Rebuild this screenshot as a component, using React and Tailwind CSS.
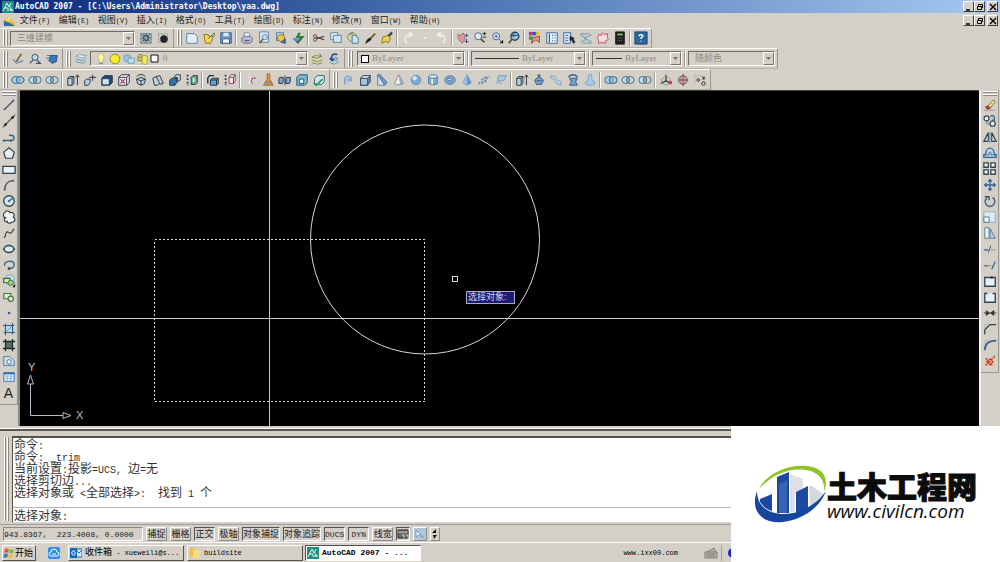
import { useState } from 'react';

const CUBE = (
    <>
        <path d="M3 6l3-3h8v7l-3 4H3z" fill="#5b86b8" />
        <path d="M3 6h8v8H3z" fill="#9fc3e2" />
        <path d="M3 6l3-3h8l-3 3z" fill="#e4f1fa" />
    </>
);

const RINGS = (
    <>
        <ellipse cx="5.5" cy="8" rx="4.5" ry="4" fill="#a9cfe4" stroke="#2b5d86" />
        <ellipse cx="10.5" cy="8" rx="4.5" ry="4" fill="#8cb9d6" fillOpacity="0.6" stroke="#2b5d86" />
    </>
);

const RINGS_OPEN = (
    <>
        <ellipse cx="5.5" cy="8" rx="4.5" ry="4" fill="#c3dcea" stroke="#3f5f7a" />
        <ellipse cx="10.5" cy="8" rx="4.5" ry="4" fill="none" stroke="#3f5f7a" />
        <path d="M8 5v6" stroke="#2f6ea5" />
    </>
);

const ICONS = {
    // workspace
    gear: <><rect x="2" y="3" width="12" height="11" fill="#9fb6c4" stroke="#4a5a66" strokeDasharray="2 1" /><circle cx="8" cy="8" r="3" fill="#e8eef2" /><path d="M8 3v3M8 10v3M3 8h3M10 8h3M4 4l8 8M12 4l-8 8" /><circle cx="8" cy="8" r="1.5" fill="#fff" /></>,
    chip: <><path d="M3 3h10v10H3z" stroke="#8a8a86" strokeDasharray="2 1" /><circle cx="9" cy="9" r="4" fill="#1e252c" stroke="#1e252c" strokeDasharray="2 1" /></>,
    // standard
    sheet: <path d="M2 3h9l3 3v8H2z" fill="#e3f0fb" stroke="#54789c" />,
    open: <><path d="M2 4h5l1 2h5l-3 8H4z" fill="#f2d25c" stroke="#8a6a14" /><path d="M7 9l7-7M14 2v4" stroke="#3e7d3e" /></>,
    save: <><path d="M2 2h12v12H2z" fill="#6c98cc" stroke="#2f5688" /><path d="M5 2h6v4H5z" fill="#dbe8f6" stroke="none" /><path d="M4 9h8v5H4z" fill="#f3f6fa" stroke="#2f5688" /></>,
    print: <><path d="M5 2h5l2 5H5z" fill="#fff" stroke="#7d7da0" /><path d="M2 8l3-2h7l2 2v4l-3 2H4l-2-2z" fill="#b9b9cf" stroke="#6a6a90" /><path d="M5 11h6" stroke="#41416e" /></>,
    preview: <><path d="M3 1h10v12H3z" fill="#dcebf7" stroke="#54789c" /><circle cx="9" cy="7" r="3" fill="#bfe0f2" stroke="#5f86a8" /><path d="M7 9l-4 5" strokeWidth="2" stroke="#7a6a4a" /></>,
    publish: <><path d="M3 2h8v9H3z" fill="#cfe4f5" stroke="#3f6da0" /><circle cx="8" cy="8" r="4" fill="#f1c644" stroke="#98722a" /><path d="M8 13l5-4v5z" fill="#3f78bd" stroke="#2f5688" /></>,
    dwf: <><path d="M10 2l-3 5h6l-6 7" stroke="#2f7a45" strokeWidth="2.5" /><path d="M2 8l5 5 3-4" fill="#5f93cf" stroke="#2f5688" /></>,
    cut: <><path d="M14 6L5 9M14 10L5 7" strokeWidth="1.5" /><circle cx="3.500" cy="6" r="1.8" stroke="#7a3940" /><circle cx="3.500" cy="10" r="1.8" stroke="#7a3940" /></>,
    copy: <><path d="M2 2h8v8H2z" fill="#e3f0fb" stroke="#54789c" /><path d="M5 5h9v8H5z" fill="#cfe4f5" stroke="#54789c" /></>,
    paste: <><circle cx="7" cy="7" r="5" fill="#d4d9a6" stroke="#7b8050" /><path d="M7 5h4l3 3v6H7z" fill="#cbe2f2" stroke="#42709a" /><path d="M4 4l4-2" stroke="#59662e" /></>,
    brush: <><path d="M14 3L8 9" strokeWidth="2" stroke="#6e5a2c" /><path d="M8 8l1 2-6 4 2-4z" fill="#1d1d1d" stroke="#1d1d1d" /></>,
    match: <><path d="M9 5l4-4 1 2-4 4z" fill="#4c4a3a" /><path d="M3 7l6-2 3 3-2 5-4-1-4 2z" fill="#f0cf50" stroke="#8d6f12" /></>,
    undo: <path d="M7 14C2 9 5 4 12 4M9 1l4 3-4 3" stroke="#f2f1ee" strokeWidth="1.6" />,
    redo: <path d="M9 14c5-5 2-10-5-10M7 1L3 4l4 3" stroke="#f2f1ee" strokeWidth="1.6" />,
    dot: <circle cx="8" cy="8" r="1" fill="#f5f5f3" stroke="#eceae4" />,
    pan: <><path d="M2 4l4 1 2-3 2 3v5l-3 4-4-4z" fill="#d69a9a" stroke="#a5696c" /><path d="M12 3v4M10 5h4M12 9v5M10 12h4" stroke="#2a4d70" /></>,
    zoomIn: <><circle cx="6" cy="6" r="4" fill="#d8ebf7" stroke="#3d5c85" /><path d="M9 9l4 4" strokeWidth="2.2" stroke="#6b5535" /><path d="M11 3h4M13 1v4M11 7h4" stroke="#222" /></>,
    zoomWin: <><circle cx="7" cy="6" r="4" fill="#d8ebf7" stroke="#3d5c85" /><path d="M5 6h4M7 4v4M10 9l3 3" stroke="#3d5c85" /><path d="M11 14h4v-4z" fill="#111" stroke="none" /></>,
    zoomPrev: <><circle cx="9" cy="6" r="4.500" fill="#9cc5e4" stroke="#1f3f6b" strokeWidth="1.6" /><path d="M6 9l-4 5" strokeWidth="2.2" stroke="#6b5535" /><path d="M12 5H6l2-2M6 5l2 2" stroke="#122c50" /></>,
    props: <><path d="M1 1h4v4H1z" fill="#d22d8b" stroke="none" /><path d="M5 1h4v4H5z" fill="#2450c8" stroke="none" /><path d="M9 1h4v4H9z" fill="#e8b92c" stroke="none" /><path d="M1 6h4v4H1z" fill="#36a14a" stroke="none" /><path d="M5 8l8-2v7l-4-3-5 4z" fill="#e6a090" stroke="#7d3a36" /></>,
    center: <><path d="M2 2h12v12H2z" fill="#e6f1fa" stroke="#2d5f95" /><path d="M5 3v10M8 5h1M11 5h1M8 8h1M11 8h1M8 11h1M11 11h1" stroke="#2d5f95" strokeWidth="1.4" /></>,
    palette: <><path d="M2 2h8v12H2z" fill="#d4e7f6" stroke="#2d5f95" /><path d="M4 5h3M4 8h3M4 11h3" stroke="#2d5f95" /><path d="M9 6l5 2-1 1 2 4-2 1-2-4-2 1z" fill="#223" stroke="#223" strokeWidth="0.5" /></>,
    sheets: <path d="M2 3h9l3 2-8 3 8 4v2H4l-2-2 7-3-7-4z" fill="#b4cbd2" stroke="#7d9da4" />,
    markup: <path d="M3 4l3 1 1-3 3 2 3-1v4l1 3-3 1v3l-4-1-4 1v-4l-2-2 2-2z" fill="#f5dede" stroke="#cb4650" />,
    calc: <><path d="M3 1h10v14H3z" fill="#221d1f" stroke="#221d1f" /><path d="M5 4h6" stroke="#6fd26f" strokeWidth="2" /><path d="M5 8h6M5 11h6" stroke="#e2625c" strokeDasharray="1 1" /></>,
    help: <><path d="M1 1h14v14H1z" fill="#2e6699" stroke="#1a436c" /><path d="M6 6c0-3 5-2 4 0-1 1-2 1-2 3M8 11v1" stroke="#fff" strokeWidth="1.6" /></>,
    // layers
    sketch: <><path d="M2 8l4 5 8-3" fill="#a7c7dc" stroke="#4a7195" /><path d="M6 11l6-9" stroke="#7d6334" strokeWidth="1.800" /></>,
    find: <><circle cx="8" cy="6" r="3.500" fill="#bcdcf0" /><path d="M6 9l-4 4M10 9l4 4H9" stroke="#39566e" strokeWidth="1.500" /></>,
    cache: <><path d="M2 4h5M1 7h5M3 10h4" stroke="#44769c" /><path d="M6 4h8l-1 7-5 2-3-3z" fill="#3a77b4" stroke="#1f4d7c" /></>,
    layers: <><path d="M2 5l4-2 8 1-4 3z" fill="#e6f1f9" stroke="#6d9cb5" /><path d="M2 8l8 2 4-3M2 11l8 2 4-3" stroke="#5f93b3" /></>,
    layerCur: <><path d="M2 6l4-2 7 1-4 2zM2 9l7 2 5-2M2 12l7 2 5-2" fill="#e8e3a0" stroke="#7b8038" /><path d="M11 2l2 3" stroke="#2d5f95" /></>,
    layerPrev: <><path d="M3 12l5 2 6-3" stroke="#5f93b3" /><path d="M12 3C6 1 4 5 6 9M3 7l3 3 3-3" stroke="#1f4d94" strokeWidth="1.800" /><circle cx="10" cy="8" r="2" fill="#9cc5e4" stroke="#5f93b3" /></>,
    bulb: <><path d="M8 2a4 4 0 0 1 2 7v3H6V9a4 4 0 0 1 2-7z" fill="#fbf6a5" stroke="#c9be72" /><path d="M6 13h4" stroke="#7b94b5" strokeWidth="2" /></>,
    sun: <circle cx="8" cy="8" r="5.500" fill="#f4ee2a" stroke="#8a8622" />,
    freeze: <><circle cx="6" cy="7" r="4" fill="#9cc5da" stroke="#6c9ab0" /><path d="M7 7h7v6H7z" fill="#c2dbe8" stroke="#6c9ab0" /></>,
    lock: <><path d="M3 6V3h4v3" stroke="#8b8630" /><path d="M2 6h5v4H2z" fill="#cfc847" stroke="#8b8630" /><rect x="7" y="4" width="6" height="10" rx="2" fill="#ece86a" stroke="#a39d34" /></>,
    // solid editing
    union: RINGS,
    subtract: RINGS_OPEN,
    intersect: RINGS_OPEN,
    extrudeFace: <><path d="M2 6l2-2h5v8l-2 2H2z" fill="#b9d3e2" stroke="#1f2a33" /><path d="M2 6h5v8M7 6l2-2" stroke="#1f2a33" /><path d="M13 14V3M11 5l2-3 2 3" stroke="#1f2a33" /></>,
    moveFace: <><path d="M2 9l2-2h4v4l-2 3H2z" fill="#b9d3e2" stroke="#1f2a33" /><path d="M7 5h8M11 2v7" stroke="#1f2a33" /></>,
    offsetFace: <><path d="M2 6l3-3h9v8l-3 3H2z" fill="#234a72" stroke="#1f2a33" /><path d="M3 7h7v6H3z" fill="#cfe2ee" stroke="none" /></>,
    deleteFace: <><path d="M2 5l3-3h9v9l-3 3H2z" fill="#e9eef2" stroke="#1f2a33" /><path d="M2 5h9v9M11 5l3-3" stroke="#1f2a33" /><path d="M4 7l5 5M9 7l-5 5" stroke="#c0307a" strokeWidth="1.500" /></>,
    rotateFace: <><path d="M3 7l5-2 5 2-1 5-4 2-4-2z" fill="#b9d3e2" stroke="#1f2a33" /><path d="M8 9v5M3 7l5 2 5-2M3 4c3-3 7-3 10 0" stroke="#1f2a33" /></>,
    taperFace: <><path d="M2 6l4-2 4 8-3 2H4z" fill="#b9d3e2" stroke="#1f2a33" /><path d="M6 4l4-1 4 9-4 1" stroke="#1f2a33" /></>,
    copyFace: <><path d="M2 8l2-2h6v5l-2 3H2z" fill="#2f73ad" stroke="#1f2a33" /><path d="M7 5l2-3h5v6l-3 2V5z" fill="#cfe2ee" stroke="#1f2a33" /></>,
    colorFace: <><path d="M7 5l2-2h5v8l-2 2H7z" fill="#6fae94" stroke="#1f2a33" /><path d="M3 2v2M3 6v2M3 10v2M3 13v1" stroke="#234" strokeWidth="2" /><path d="M9 6h2v4H9z" fill="#e6efe9" stroke="none" /></>,
    copyEdge: <><path d="M5 8l2-2h7v6l-2 2H5z" fill="#69a1cf" stroke="#1f2a33" /><path d="M5 8h7v6M12 8l2-2" stroke="#1f2a33" /><path d="M2 12V6l2-3h5" stroke="#1f2a33" strokeWidth="1.500" /></>,
    colorEdge: <><path d="M7 5l2-3h5v7l-2 3H7z" fill="#f6e7ec" stroke="#a4315d" /><path d="M7 5h5v7M12 5l2-3" stroke="#33404a" /><path d="M3 2v2M3 6v2M3 10v2M3 13v1" stroke="#2b3b3b" strokeWidth="2" /></>,
    imprint: <><path d="M4 3l4 3-3 6" stroke="#e5e3f3" strokeWidth="2" /><path d="M13 6c-5-1-6 3-3 6" stroke="#a32e66" strokeDasharray="2 1" strokeWidth="1.500" /></>,
    clean: <><path d="M7 1h3v6l4 7H3l4-7z" fill="#e2903c" stroke="#b8682d" /><path d="M3 14l3-5 2 4 2-4 3 5" stroke="#6a80b0" /></>,
    separate: <><path d="M1 7l1-2h4v5l-1 2H1zM9 7l1-2h4v5l-1 2H9z" fill="#7aa7c8" stroke="#1f2a33" /><path d="M8 3v11" stroke="#1f2a33" /></>,
    shell: <><path d="M2 5l3-3h9v9l-3 3H2z" fill="#7ab8d0" stroke="#1d5266" /><path d="M5 7h5v5H5z" fill="#d9edf2" stroke="#1d5266" /></>,
    check: <><path d="M3 6l3-3h8v7l-3 3H3z" fill="#cfe8ee" stroke="#295b77" /><path d="M2 11l3 3 7-7" stroke="#2d9659" strokeWidth="2" /></>,
    // modeling
    polysolid: <path d="M4 13V6l3-3 5 2v4l-3-2v3" fill="#a9c6e2" stroke="#6a93bd" />,
    box: CUBE,
    wedge: <><path d="M3 2l3 0 8 9-3 3z" fill="#6f97c2" stroke="#55779e" /><path d="M3 2l8 12H3z" fill="#cfe1f1" stroke="#55779e" /></>,
    cone: <><path d="M8 2l5 10c-2 2-8 2-10 0z" fill="#eef3f7" stroke="#6f8296" /><path d="M8 2l5 10c-1 1-2 2-4 2z" fill="#93a6ba" stroke="none" /></>,
    sphere: <><circle cx="8" cy="8" r="5.500" fill="#7ea8d4" stroke="#6e8fb5" /><circle cx="6.500" cy="6" r="2.500" fill="#d5e7f7" stroke="none" /></>,
    cylinder: <><path d="M3 4v8c2 2 8 2 10 0V4z" fill="#7fa9d6" stroke="#4a6f9a" /><path d="M6 6h2v7H6z" fill="#dcecf9" stroke="none" /><ellipse cx="8" cy="4" rx="5" ry="2" fill="#dcecf9" stroke="#4a6f9a" /></>,
    torus: <><ellipse cx="8" cy="8" rx="6" ry="5" fill="#7aa4d0" stroke="#5a7ca4" /><ellipse cx="7.500" cy="7.500" rx="2" ry="1.500" fill="#eef4fa" stroke="#3d5e85" /></>,
    pyramid: <><path d="M8 2l5 9-5 3-5-3z" fill="#9cc3e5" stroke="#7ba6cd" /><path d="M8 2v12l5-3z" fill="#6796c4" stroke="none" /></>,
    helix: <path d="M2 13c1-4 4-3 4 0 0-5 5-6 4-2-1-5 4-6 4-8M5 8l6-4" stroke="#6489ae" strokeDasharray="3 1" strokeWidth="1.600" />,
    plane: <><path d="M5 3h9l-3 6H4z" fill="#a8cae8" stroke="#6e97bd" /><path d="M2 12l4-2 2 3" stroke="#8ab1d4" strokeWidth="1.500" /></>,
    sweep: <path d="M2 3l5 1 3 5 4 1-1 4-5-3-2-4-4-1z" fill="#c4d6e5" stroke="#7d9bb6" />,
    press: <><path d="M3 8l5-4 5 4-2 5H5z" fill="#7aa5d4" stroke="#334f78" /><path d="M8 1v4M6 3h4M5 9h6" stroke="#334f78" /></>,
    revolve: <><path d="M3 5c2-4 8-4 10 0" stroke="#2f6396" strokeWidth="1.600" /><path d="M4 6h9l-2 4 2 4H4l2-4z" fill="#6f9ecb" stroke="#355b85" /></>,
    loft: <path d="M6 2h4v5l4 5-4 2H5l-3-2 4-5z" fill="#a5cae6" stroke="#79a5c9" />,
    ucs: <><path d="M8 9V2M8 9l-6 3M8 9l6 3" stroke="#2e3d36" strokeWidth="1.400" /><path d="M3 7l5-4 5 4v4l-5 3-5-3z" stroke="#83928c" /><circle cx="13" cy="11" r="1.500" fill="#c0323a" stroke="#c0323a" /></>,
    orbit: <><circle cx="8" cy="8" r="5" stroke="#49695e" /><path d="M8 1v14M2 8h12" stroke="#7b2f45" /><ellipse cx="8" cy="8" rx="2.500" ry="5" stroke="#a04a63" /></>,
    convert: <><path d="M2 2v12M2 3h7" stroke="#999" strokeDasharray="1 1" /><circle cx="6" cy="8" r="1.500" stroke="#222" /><path d="M10 4l4 3M13 4l-2 4" stroke="#222" /><circle cx="12" cy="12" r="2" stroke="#222" /></>,
    // draw
    line: <><path d="M3 13L13 3" strokeWidth="1.400" /><path d="M2 12h2v2H2zM12 2h2v2h-2z" fill="#35658f" stroke="none" /></>,
    xline: <><path d="M1 15L15 1" strokeWidth="1.300" /><circle cx="4" cy="12" r="1" fill="#111" stroke="#111" /><circle cx="12" cy="4" r="1" fill="#111" stroke="#111" /></>,
    pline: <><path d="M2 12h8c5 0 5-6 0-6H8" stroke="#35658f" strokeWidth="1.500" /><path d="M1 11h2v2H1zM9 11h2v2H9z" fill="#34434f" stroke="none" /></>,
    polygon: <path d="M8 2l6 5-2 7H4L2 7z" fill="#e9eef0" strokeWidth="1.400" />,
    rect: <path d="M1 5h14v8H1z" fill="#e6f0f7" strokeWidth="1.500" />,
    arc: <><path d="M3 14C3 7 7 3 13 3" strokeWidth="1.600" /><path d="M2 12h2v2H2zM12 2h2v2h-2z" fill="#35658f" stroke="none" /></>,
    circle: <><circle cx="8" cy="8" r="6" fill="#d8e9f5" strokeWidth="1.500" /><path d="M8 8l4-3" stroke="#2f65a0" strokeWidth="1.600" /><circle cx="8" cy="8" r="1" fill="#2f65a0" stroke="#2f65a0" /></>,
    cloud: <path d="M3 3c2-3 5-2 6 0 4-1 6 2 4 5 3 2 2 6-2 6-2 2-5 1-5-1-4 1-4-3-2-4-3-1-3-4-1-6z" fill="#f4f6f7" strokeWidth="1.400" />,
    spline: <path d="M2 13c3 1 1-8 5-6 4 3 4 0 7-4" strokeWidth="1.300" />,
    ellipse: <><ellipse cx="8" cy="8" rx="5.500" ry="4" fill="#dcebf5" strokeWidth="1.700" /><path d="M1 7h2v2H1zM13 7h2v2h-2zM7 3h2v2H7z" fill="#35658f" stroke="none" /></>,
    ellArc: <><path d="M3 9C1 3 13 2 14 7c0 4-3 5-6 5" strokeWidth="1.600" stroke="#44688a" /><path d="M7 11h2v2H7z" fill="#35658f" /></>,
    insert: <><path d="M4 6a5 5 0 0 1 10 0v6H6z" fill="#c5def0" stroke="#7ba0c0" /><path d="M2 5h7v5H2z" fill="#d3efc2" stroke="#37692b" strokeWidth="1.400" /><circle cx="10" cy="10" r="3" fill="#a8cf8c" stroke="#37692b" /><path d="M12 15h3v-4z" fill="#111" stroke="none" /></>,
    block: <><path d="M2 4h8v6H2z" fill="#e2f1d6" stroke="#4f7545" strokeWidth="1.400" /><circle cx="10" cy="10" r="3" fill="#d3e5c6" stroke="#4f7545" strokeWidth="1.400" /></>,
    point: <circle cx="8" cy="8" r="1" fill="#1f4d94" stroke="#1f4d94" />,
    hatch: <><path d="M4 2v13M12 1v13M1 4h13M2 12h13" strokeWidth="1.400" stroke="#345f8c" /><path d="M5 5h6v6H5z" fill="#b5dbf5" stroke="none" /><path d="M5 11l6-6" stroke="#5c92c5" /></>,
    gradient: <><path d="M4 4h8v8H4z" fill="#5b6f67" stroke="none" /><path d="M4 1v14M12 1v14M1 4h14M1 12h14" strokeWidth="1.500" stroke="#1e2a2e" /></>,
    region: <><path d="M2 3h7l5 5v5H2z" fill="#cfe3f3" stroke="#41719c" /><circle cx="8" cy="9" r="2.500" fill="#fff" stroke="#2f5f8e" /></>,
    table: <><path d="M2 3h12v10H2z" fill="#eef5fc" stroke="#356db0" /><path d="M2 4h12" stroke="#2c66b2" strokeWidth="2" /><path d="M6 4v9M10 4v9M2 7h12M2 10h12" stroke="#86afe0" /></>,
    // modify
    erase: <><path d="M5 10l7-8 2 2-6 8z" fill="#eee08a" stroke="#7c6f2b" /><path d="M3 10l3-1 2 3-3 1z" fill="#cc3a3a" stroke="#8a2b2b" /><path d="M1 14h13" stroke="#8aa0a8" /></>,
    clone: <><circle cx="4" cy="5" r="2.800" fill="#e5edf2" strokeWidth="1.400" /><path d="M8 3c2-2 6-1 5 2M13 4v3h-3" strokeWidth="1.400" stroke="#35658f" /><path d="M5 8c-2 2-1 4 2 3" stroke="#35658f" /><circle cx="11" cy="11" r="3" fill="#e5edf2" strokeWidth="1.400" /></>,
    mirror: <><path d="M6 3v10H1zM10 3v10h5z" fill="#cfdee5" strokeWidth="1.300" /><path d="M8 2v13" stroke="#3c7fb0" /></>,
    offset: <><path d="M1 13h14v-3h-2c0-10-10-10-10 0H1z" fill="#b4d5ec" stroke="#346292" strokeWidth="1.500" /><path d="M4 10h3c-1-4 3-4 2 0h3" stroke="#346292" /></>,
    array: <path d="M1 1h5v5H1zM9 1h5v5H9zM1 9h5v5H1zM9 9h5v5H9z" fill="#f1f4f4" strokeWidth="1.500" />,
    move: <path d="M8 2v12M2 8h12M6 4l2-2 2 2M6 12l2 2 2-2M4 6L2 8l2 2M12 6l2 2-2 2" stroke="#2e6498" strokeWidth="1.500" />,
    rotate: <><path d="M5 4a5.500 5.500 0 1 0 6 0" stroke="#4b6c88" strokeWidth="1.800" /><path d="M2 3h5v4" stroke="#2c4965" strokeWidth="1.400" /></>,
    scale: <><path d="M1 2h13v12H1z" fill="#dbeaf5" stroke="#8dabc1" /><path d="M1 8h6v6H1z" fill="#f5fafd" stroke="#476d8d" /></>,
    stretch: <><path d="M2 2h5v12H2z" fill="#e3eff7" stroke="#50728c" /><path d="M8 3l6 11H8z" fill="#b5d0e4" stroke="#50728c" /></>,
    trim: <><path d="M1 9h5" stroke="#2f6a9c" strokeWidth="1.500" /><path d="M9 9h6" stroke="#777" strokeDasharray="2 1" /><path d="M6 12l3-8" /></>,
    extend: <><path d="M1 9h5" stroke="#333" /><path d="M7 9h4" stroke="#777" strokeDasharray="2 1" /><path d="M10 13l4-9" stroke="#39709c" strokeWidth="1.500" /></>,
    breakPt: <><path d="M2 4h12v10H2z" fill="#e6f1f9" strokeWidth="1.500" /><path d="M9 3h2v2H9z" fill="#111" stroke="none" /></>,
    breakGap: <path d="M5 4H2v10h12V4h-3" fill="#e6f1f9" strokeWidth="1.500" />,
    join: <path d="M1 8h14M4 6l3 2-3 2zM12 6L9 8l3 2z" fill="#333" stroke="#333" strokeWidth="1.400" />,
    chamfer: <><path d="M2 14V9l6-6h7" strokeWidth="1.500" /><path d="M2 9V3h6" stroke="#88a0ae" strokeDasharray="1 1" /></>,
    fillet: <><path d="M2 14C2 7 6 3 15 3" stroke="#35658f" strokeWidth="2" /><path d="M2 9V3h6" stroke="#88a0ae" strokeDasharray="1 1" /></>,
    explode: <><path d="M3 5h9v8H3z" fill="#e9a57c" stroke="none" /><path d="M3 5l3 3 3-3 2 4-2 4-3-3-3 3M4 9h8" stroke="#b5352a" strokeDasharray="2 1" strokeWidth="1.600" /><path d="M11 5l3-3" stroke="#c9783a" strokeWidth="2" /></>,
};

function Icon({ name }) {
    return (
        <svg viewBox="0 0 16 16" className="h-[14px] w-[14px] shrink-0" fill="none" stroke="#34434f">
            {ICONS[name]}
        </svg>
    );
}

function Tool({ name }) {
    return (
        <button type="button" aria-label={name} className="flex h-4 w-[17px] shrink-0 items-center justify-center hover:bg-[#e4e1da]">
            <Icon name={name} />
        </button>
    );
}

function Divider() {
    return <span className="mx-px h-4 w-[2px] shrink-0 border-l border-[#a09c94] bg-white" />;
}

function Grip() {
    return (
        <span className="mr-px ml-[3px] flex h-4 shrink-0 gap-px">
            <span className="w-[2px] border-r border-[#8d8a83] bg-white" />
            <span className="w-[2px] border-r border-[#8d8a83] bg-white" />
        </span>
    );
}

// names is a list of icon names, '|' puts a divider between two groups
function Tools({ names }) {
    return names.split(' ').map((name, i) => (name === '|' ? <Divider key={i} /> : <Tool key={i} name={name} />));
}

function Bar({ children }) {
    return (
        <div className="flex h-full shrink-0 items-center border-y border-r border-t-white border-r-[#9b978f] border-b-[#b5b1a9] pr-[2px]">
            <Grip />
            {children}
        </div>
    );
}

function Combo({ label, value, width, children }) {
    return (
        <div className={`flex h-[15px] shrink-0 items-center border border-t-[#6f6c66] border-r-white border-b-white border-l-[#6f6c66] pl-[3px] ${width}`}>
            {children}
            <select aria-label={label} className="min-w-0 flex-1 appearance-none bg-transparent pl-[3px] font-[Liberation_Serif,Noto_Sans_CJK_SC,serif] text-[9px] leading-[13px] text-[#8b8881] outline-none">
                <option>{value}</option>
            </select>
            <span className="flex h-[13px] w-[11px] items-center justify-center border border-t-white border-r-[#77746d] border-b-[#77746d] border-l-white">
                <svg viewBox="0 0 5 3" className="h-[3px] w-[5px]" fill="#77746d"><path d="M0 0h5L2.500 3z" /></svg>
            </span>
        </div>
    );
}

// Chinese glyphs at the inherited size, everything else in a smaller mono face
function Mixed({ children, latin = 'text-[8px]' }) {
    return children.split(/([\x20-\x7e]+)/).map((part, i) => (
        i % 2 ? <span key={i} className={`font-[Liberation_Mono,monospace] whitespace-pre ${latin}`}>{part}</span> : part
    ));
}

function WindowButtons() {
    const box = 'flex h-[11px] w-[11px] items-center justify-center border border-t-white border-r-[#404040] border-b-[#404040] border-l-white bg-[#d4d0c8]';
    return (
        <div className="mr-[2px] flex shrink-0 items-center">
            <button type="button" aria-label="最小化" className={box}>
                <svg viewBox="0 0 8 8" className="h-2 w-2" stroke="#000" strokeWidth="1.500"><path d="M1 7h4" /></svg>
            </button>
            <button type="button" aria-label="还原" className={box}>
                <svg viewBox="0 0 8 8" className="h-2 w-2" stroke="#000" fill="none"><path d="M2.500 3V1.500h4v3H5M1.500 3.500h4v3h-4z" /></svg>
            </button>
            <button type="button" aria-label="关闭" className={`ml-[2px] ${box}`}>
                <svg viewBox="0 0 8 8" className="h-2 w-2" stroke="#000" strokeWidth="1.300"><path d="M1 1l6 6M7 1L1 7" /></svg>
            </button>
        </div>
    );
}

function AppLogo() {
    return (
        <svg viewBox="0 0 12 12" className="h-3 w-3 shrink-0">
            <rect width="12" height="12" fill="#1f8f80" />
            <path d="M1 10l4-8 2 4 2-4M2 7h4v3M8 6l2 4M7 9h4" stroke="#e6f5f2" fill="none" />
        </svg>
    );
}

const MENUS = ['文件(F)', '编辑(E)', '视图(V)', '插入(I)', '格式(O)', '工具(T)', '绘图(D)', '标注(N)', '修改(M)', '窗口(W)', '帮助(H)'];

const DRAW = 'line xline pline polygon rect arc circle cloud spline ellipse ellArc insert block point hatch gradient region table';
const MODIFY = 'erase clone mirror offset array move rotate scale stretch trim extend breakPt breakGap join chamfer fillet explode';

const MODES = [
    { label: '捕捉', on: false },
    { label: '栅格', on: false },
    { label: '正交', on: true },
    { label: '极轴', on: false },
    { label: '对象捕捉', on: true },
    { label: '对象追踪', on: true },
    { label: 'DUCS', on: true },
    { label: 'DYN', on: true },
    { label: '线宽', on: false },
];

const HISTORY = ['命令:', '命令: _trim', '当前设置:投影=UCS, 边=无', '选择剪切边...', '选择对象或 <全部选择>:  找到 1 个'];

function SideBar({ names, children }) {
    return (
        <div className="flex w-[18px] shrink-0 flex-col items-center self-start border-r border-b border-[#9b978f] pb-[3px]">
            <span className="mt-px mb-px h-[2px] w-[14px] border-b border-[#8d8a83] bg-white" />
            <span className="mb-px h-[2px] w-[14px] border-b border-[#8d8a83] bg-white" />
            <Tools names={names} />
            {children}
        </div>
    );
}

function Canvas() {
    return (
        <div className="relative flex min-w-0 flex-1 overflow-hidden border-t border-t-[#403e3a] bg-black">
            <svg className="min-h-[334px] min-w-0 flex-1" fill="none" stroke="#d8d8d8" aria-label="绘图区">
                <g shapeRendering="crispEdges">
                    <path d="M249.500 0v2000M0 227.500h4000" stroke="#c9c9c9" />
                    <rect x="134.500" y="148.500" width="270" height="162" strokeDasharray="2 2" />
                    <rect x="432.500" y="185.500" width="5" height="5" />
                </g>
                <circle cx="405" cy="148.500" r="114.500" />
                <g stroke="#bdbdbd">
                    <path d="M10.500 293v31.500H43M7.500 293l3-9 3 9zM43 321.500l8 3-8 3z" />
                </g>
                <g fill="#bdbdbd" stroke="none" className="font-[Liberation_Sans,sans-serif] text-[11px]">
                    <text x="8" y="280">Y</text>
                    <text x="56" y="328">X</text>
                </g>
            </svg>
            <div className="absolute top-[200px] left-[446px] w-[49px] border border-[#a9a9c9] bg-[#1d1d70] pl-px text-[9px] leading-[11px] whitespace-nowrap text-[#d2d2ee]">
                选择对象:
            </div>
        </div>
    );
}

function CommandWindow() {
    const [command, setCommand] = useState('');

    return (
        <div className="mt-[3px] flex flex-1 border-t-2 border-t-[#5c5953] pt-[5px] shadow-[0_-1px_0_#ffffff]">
            <div className="mr-[3px] ml-1 flex gap-px py-px">
                <span className="w-[2px] border-r border-[#8d8a83] bg-white" />
                <span className="w-[2px] border-r border-[#8d8a83] bg-white" />
            </div>
            <div className="flex min-w-0 flex-1 flex-col border-t-2 border-l border-[#55524d] bg-white text-[12px] leading-[12px] text-[#333]">
                <div className="flex-1 pt-px pb-[6px] pl-px">
                    {HISTORY.map((line, i) => (
                        <div key={i} className="h-3 whitespace-nowrap"><Mixed latin="text-[10px]">{line}</Mixed></div>
                    ))}
                </div>
                <label className="block h-[15px] border-t border-[#b7b4ad] pt-[2px] pl-px whitespace-nowrap">
                    <Mixed latin="text-[10px]">选择对象:</Mixed>
                    <input value={command} onChange={(e) => setCommand(e.target.value)} className="h-3 bg-transparent pl-1 outline-none" />
                </label>
            </div>
        </div>
    );
}

function StatusBar() {
    const [modes, setModes] = useState(MODES);

    const toggle = (label) => {
        setModes(modes.map((m) => (m.label === label ? { ...m, on: !m.on } : m)));
    };

    const up = 'border-t-white border-l-white border-r-[#8d8a83] border-b-[#8d8a83]';
    const down = 'border-t-[#55524d] border-l-[#55524d] border-r-white border-b-white';

    return (
        <div className="mt-[2px] flex h-[18px] items-center gap-[3px] border-t border-[#a09c94] pl-[3px] text-[9px] leading-[12px]">
            <span className="h-[14px] w-[140px] shrink-0 overflow-hidden border border-t-[#8d8a83] border-r-white border-b-white border-l-[#8d8a83]">
                <Mixed>{'943.8367,  223.4008, 0.0000'}</Mixed>
            </span>
            {modes.map(({ label, on }) => (
                <button
                    key={label}
                    type="button"
                    aria-pressed={on}
                    onClick={() => toggle(label)}
                    className={`h-[14px] min-w-[21px] shrink-0 border text-center whitespace-nowrap ${on ? down : up}`}
                >
                    <Mixed>{label}</Mixed>
                </button>
            ))}
            <button type="button" aria-label="模型" className={`h-[14px] w-[14px] border ${down}`}>
                <svg viewBox="0 0 12 12" className="h-3 w-3" stroke="#222" fill="#6d706b"><path d="M1 2h10v8H1z" /><path d="M1 4h10M5 7h2v3M9 7h2v3" stroke="#c9cdc5" /></svg>
            </button>
            <button type="button" aria-label="注释" className={`h-[14px] w-[14px] border ${up}`}>
                <svg viewBox="0 0 12 12" className="h-3 w-3"><path d="M0 0h12v12H0z" fill="#aec7de" /><path d="M2 2v7l3-2 5 3z" fill="#e7eff6" stroke="#7d9bb8" /></svg>
            </button>
            <button type="button" aria-label="状态栏菜单" className={`h-[14px] w-[10px] border ${up}`}>
                <svg viewBox="0 0 8 12" className="h-3 w-2"><path d="M5 1v4H1zM2 7h4l-3 4z" fill="#111" /></svg>
            </button>
        </div>
    );
}

function TaskBar() {
    const task = 'flex h-4 w-[116px] shrink-0 items-center gap-[3px] overflow-hidden border pl-px whitespace-nowrap';
    const up = 'border-t-white border-l-white border-r-[#55524d] border-b-[#55524d]';
    return (
        <div className="flex h-5 items-center gap-[2px] overflow-hidden border-t border-white pl-[2px] text-[9px] leading-[12px] text-black">
            <button type="button" className={`flex h-4 w-[34px] shrink-0 items-center border text-[9px] whitespace-nowrap ${up}`}>
                <svg viewBox="0 0 12 12" className="h-3 w-3 shrink-0">
                    <path d="M2 2c2-1 3 0 4 0L5 6C4 5 3 5 1 6z" fill="#df5a2c" />
                    <path d="M7 2c1 1 3 1 4 0l-1 4c-2 1-3 0-4 0z" fill="#83b83c" />
                    <path d="M1 7c2-1 3 0 4 0l-1 4c-1-1-2-1-4 0z" fill="#3f79c8" />
                    <path d="M6 7c1 1 2 1 4 0l-1 4c-2 1-3 0-4 0z" fill="#f0c033" />
                </svg>
                开始
            </button>
            <button type="button" aria-label="网盘" className="flex w-7 shrink-0 items-center justify-center pl-1">
                <svg viewBox="0 0 12 12" className="h-3 w-3">
                    <rect width="12" height="12" rx="2" fill="#2f8fe8" />
                    <path d="M3 9a2 2 0 0 1 0-4 3 3 0 0 1 6 0 2 2 0 0 1 0 4z" fill="none" stroke="#fff" /><path d="M4 7h4" stroke="#fff" />
                </svg>
            </button>
            <button type="button" className={`${task} ${up}`}>
                <svg viewBox="0 0 12 12" className="h-3 w-3 shrink-0">
                    <path d="M6 2h6v8H6z" fill="#dce9f6" stroke="#1d69b5" /><path d="M6 3l3 3 3-3" stroke="#1d69b5" fill="none" />
                    <path d="M0 1h7v10H0z" fill="#1268b8" /><ellipse cx="3.500" cy="6" rx="1.700" ry="2.200" fill="none" stroke="#fff" />
                </svg>
                <span><Mixed latin="text-[7px]">收件箱 - xueweili@s...</Mixed></span>
            </button>
            <button type="button" className={`${task} ml-px ${up}`}>
                <svg viewBox="0 0 12 12" className="h-3 w-3 shrink-0"><path d="M1 1h5v9H1z" fill="#e9c34a" /><path d="M4 3h7v8H4z" fill="#f6dd7f" /></svg>
                <span><Mixed latin="text-[7px]">buildsite</Mixed></span>
            </button>
            <button type="button" className={`${task} border-t-[#55524d] border-r-white border-b-white border-l-[#55524d] bg-white font-bold`}>
                <AppLogo />
                <span><Mixed>AutoCAD 2007 - ...</Mixed></span>
            </button>
            <span className="ml-auto shrink-0 pr-6"><Mixed latin="text-[7px]">www.ixx00.com</Mixed></span>
            <svg viewBox="0 0 14 12" className="h-3 w-[14px] shrink-0" fill="#b1aea6" stroke="#85827b">
                <path d="M1 5h12v6H1zM3 5l7-4 2 4M3 7h8M3 9h8" />
            </svg>
            <span className="mr-1 ml-px h-4 w-px shrink-0 bg-[#9aa3b8]" />
            <svg viewBox="0 0 3 10" className="h-[10px] w-[3px] shrink-0"><circle cx="5" cy="5" r="5" fill="#2020cc" /></svg>
        </div>
    );
}

function CivilLogo() {
    return (
        <div className="flex w-[269px] shrink-0 items-center bg-white pl-6">
            <svg viewBox="0 0 72 60" className="h-[60px] w-[72px] shrink-0">
                <path d="M35 10l13 5v9l-8 5v19h-5z" fill="#dfe1e4" />
                <path d="M54 22h3l11 8-13 14z" fill="#d5d8dc" />
                <path d="M5 35l12-5v17C12 46 8 42 5 38zM22 13l12-5v41H22zM41 28l12-6v23l-12 4z" fill="#1d48a0" />
                <path d="M24 20l8-4v33h-8z" fill="#3564b5" />
                <path d="M4 25C12 8 38-2 58 3c13 4 15 14 11 25 1-10-3-17-13-21C38 2 18 9 4 25z" fill="#8fc42b" />
                <path d="M2 27C-5 46 6 60 28 58c20-2 38-16 43-31-10 14-26 23-42 23C12 50 2 41 2 27z" fill="#17469e" />
            </svg>
            <div className="pt-[3px] whitespace-nowrap text-[#0c0c0c]">
                <div className="font-[Noto_Sans_CJK_SC,sans-serif] text-[30px] leading-[30px] font-black [-webkit-text-stroke:1px_#0c0c0c]">土木工程网</div>
                <div className="mt-px font-[Open_Sans,sans-serif] text-[19px] leading-[20px] font-medium italic">www.civilcn.com</div>
            </div>
        </div>
    );
}

function App() {
    return (
        <div className="flex min-h-screen flex-col overflow-hidden bg-[#d4d0c8] font-[Liberation_Sans,Noto_Sans_CJK_SC,sans-serif] text-[#1b1b1b]">
            <header className="flex h-[13px] items-center gap-px bg-linear-to-r from-[#0a2a7c] to-[#a6caf0] pl-[2px]">
                <AppLogo />
                <h1 className="flex-1 font-[DejaVu_Sans_Mono,monospace] text-[8px] leading-[13px] font-bold text-white">
                    AutoCAD 2007 - [C:\Users\Administrator\Desktop\yaa.dwg]
                </h1>
                <WindowButtons />
            </header>

            {/* Menu bar */}
            <nav className="flex h-[15px] items-center pl-[2px]">
                <svg viewBox="0 0 14 12" className="h-3 w-[14px] shrink-0">
                    <path d="M1 6l5-5 3 4 4 3v3H2z" fill="#e8bd30" /><path d="M2 6l6 2 5 3H2z" fill="#2d6ca8" /><path d="M4 5l3-4 1 5z" fill="#fae98a" />
                </svg>
                <div className="flex flex-1">
                    {MENUS.map((menu) => (
                        <button key={menu} type="button" className="w-[39px] pr-px text-center text-[9px] leading-[15px] whitespace-nowrap hover:bg-[#e4e1da]">
                            <Mixed latin="text-[7px]">{menu}</Mixed>
                        </button>
                    ))}
                </div>
                <WindowButtons />
            </nav>

            {/* Workspace and standard toolbars */}
            <div className="flex h-5">
                <Bar>
                    <span className="w-px" />
                    <Combo label="工作空间" value="三维建模" width="w-[125px]" />
                    <span className="w-[2px]" />
                    <Tools names="gear chip" />
                </Bar>
                <Bar>
                    <Tools names="sheet open save | print preview publish dwf | cut copy paste brush match | undo dot redo | pan zoomIn zoomWin zoomPrev | props center palette sheets markup calc | help" />
                </Bar>
            </div>

            {/* Layer and property toolbars */}
            <div className="flex h-[21px]">
                <Bar><Tools names="sketch find cache" /></Bar>
                <Bar>
                    <Tools names="layers" />
                    <span className="w-px" />
                    <Combo label="图层" value="0" width="w-[218px]">
                        <span className="flex">
                            <Icon name="bulb" />
                            <Icon name="sun" />
                            <Icon name="freeze" />
                            <Icon name="lock" />
                            <svg viewBox="0 0 10 14" className="h-[14px] w-[10px]"><path d="M1 3h7v7H1z" fill="#fff" stroke="#111" /></svg>
                        </span>
                    </Combo>
                    <Tools names="layerCur layerPrev" />
                </Bar>
                <Bar>
                    <div className="flex items-center gap-px pl-[3px]">
                        <Combo label="颜色" value="ByLayer" width="w-[108px]">
                            <span className="h-2 w-2 border border-black bg-white" />
                        </Combo>
                        <Divider />
                        <Combo label="线型" value="ByLayer" width="w-[115px]">
                            <span className="h-px w-11 bg-[#333]" />
                        </Combo>
                        <Divider />
                        <Combo label="线宽" value="ByLayer" width="w-[90px]">
                            <span className="h-px w-[26px] bg-[#333]" />
                        </Combo>
                        <Divider />
                        <Combo label="打印样式" value="随颜色" width="w-[87px]" />
                    </div>
                </Bar>
            </div>

            {/* Solid editing and modeling toolbars */}
            <div className="flex h-[21px]">
                <Bar>
                    <Tools names="union subtract intersect | extrudeFace moveFace offsetFace deleteFace rotateFace taperFace copyFace colorFace | copyEdge colorEdge | imprint clean separate shell check" />
                </Bar>
                <Bar>
                    <Tools names="polysolid box wedge cone sphere cylinder torus pyramid helix plane | extrudeFace press sweep revolve loft | union subtract intersect | ucs orbit convert" />
                </Bar>
            </div>

            <main className="flex flex-1">
                <SideBar names={DRAW}>
                    <button type="button" className="h-4 text-[14px] leading-4 text-[#222]">A</button>
                </SideBar>
                <span className="w-[2px] bg-[#8d8a83]" />
                <Canvas />
                <span className="w-[2px] bg-[#f4f3f0]" />
                <SideBar names={MODIFY} />
                <span className="w-px" />
            </main>

            <footer className="flex h-[136px]">
                <div className="flex min-w-0 flex-1 flex-col">
                    <CommandWindow />
                    <StatusBar />
                    <TaskBar />
                </div>
                <CivilLogo />
            </footer>
        </div>
    );
}

export default App;
